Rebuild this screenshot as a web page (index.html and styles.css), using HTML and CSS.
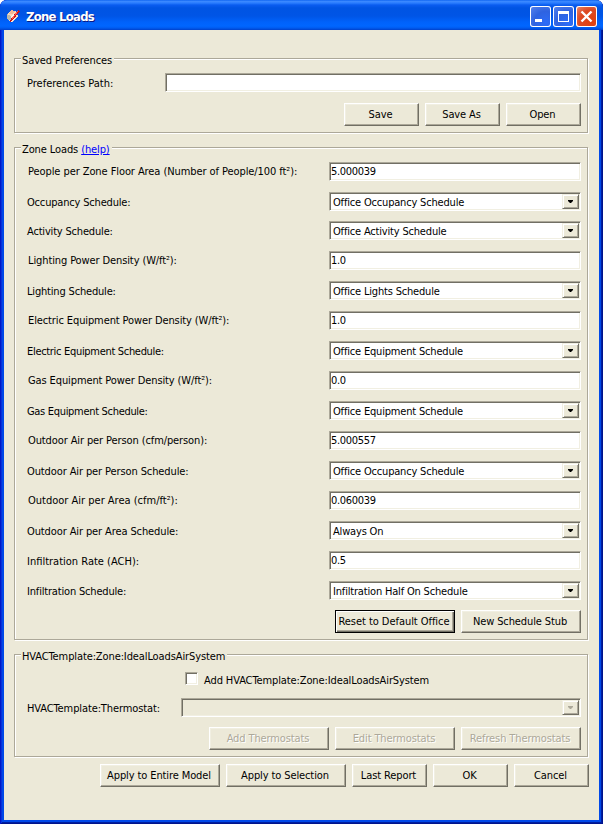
FILE: index.html
```html
<!DOCTYPE html>
<html lang="en">
<head>
<meta charset="utf-8">
<title>Zone Loads</title>
<link rel="stylesheet" href="styles.css">
</head>
<body>
<div class="window">
  <header class="titlebar">
    <svg class="app-icon" width="16" height="16" viewBox="0 0 16 16" shape-rendering="crispEdges">
      <path d="M1 6L6 2L11 4L12 9L6 14L1 11Z" fill="#f4d9bd"/>
      <path d="M1 6L5 8V13L1 11Z" fill="#b9b7ac"/>
      <path d="M5 8L8 6L9 11L5 14Z" fill="#f7f3e8"/>
      <path d="M5 2L9 3L7 6L3 6Z" fill="#f0b995"/>
      <path d="M12 2L14 3L6 13L4 14L5 11Z" fill="#c71616"/>
      <path d="M12 3L6 11" stroke="#ff5a4c"/>
    </svg>
    <h1 class="title">Zone Loads</h1>
    <div class="controls">
      <svg class="control" viewBox="0 0 21 21"><path d="M5 13h7v3H5z" fill="#fff"/></svg>
      <svg class="control" viewBox="0 0 21 21"><path d="M5 5h11v11H5zM6 8v7h9V8z" fill="#fff" fill-rule="evenodd"/></svg>
      <svg class="control close" viewBox="0 0 21 21"><path d="M5.5 5.5l10 10M15.5 5.5l-10 10" stroke="#fff" stroke-width="2.4"/></svg>
    </div>
  </header>
  <main class="client">
    <section class="group preferences">
      <h2 class="legend">Saved Preferences</h2>
      <div class="row"><span class="label wide">Preferences Path:</span><div class="field path"></div></div>
      <div class="buttons"><button class="btn small">Save</button><button class="btn small">Save As</button><button class="btn small">Open</button></div>
    </section>

    <section class="group loads">
      <h2 class="legend">Zone Loads <a href="#">(help)</a></h2>
      <div class="row first"><span class="label value people">People per Zone Floor Area (Number of People/100 ft²):</span><div class="field">5.000039</div></div>
      <div class="row short"><span class="label tight">Occupancy Schedule:</span><div class="field combo">Office Occupancy Schedule<i class="arrow"></i></div></div>
      <div class="row"><span class="label tight">Activity Schedule:</span><div class="field combo">Office Activity Schedule<i class="arrow"></i></div></div>
      <div class="row"><span class="label value">Lighting Power Density (W/ft²):</span><div class="field">1.0</div></div>
      <div class="row"><span class="label tight">Lighting Schedule:</span><div class="field combo">Office Lights Schedule<i class="arrow"></i></div></div>
      <div class="row"><span class="label value">Electric Equipment Power Density (W/ft²):</span><div class="field">1.0</div></div>
      <div class="row"><span class="label tighter">Electric Equipment Schedule:</span><div class="field combo">Office Equipment Schedule<i class="arrow"></i></div></div>
      <div class="row"><span class="label value">Gas Equipment Power Density (W/ft²):</span><div class="field">0.0</div></div>
      <div class="row"><span class="label tighter">Gas Equipment Schedule:</span><div class="field combo">Office Equipment Schedule<i class="arrow"></i></div></div>
      <div class="row"><span class="label value">Outdoor Air per Person (cfm/person):</span><div class="field">5.000557</div></div>
      <div class="row"><span class="label">Outdoor Air per Person Schedule:</span><div class="field combo">Office Occupancy Schedule<i class="arrow"></i></div></div>
      <div class="row"><span class="label value wide">Outdoor Air per Area (cfm/ft²):</span><div class="field">0.060039</div></div>
      <div class="row"><span class="label">Outdoor Air per Area Schedule:</span><div class="field combo">Always On<i class="arrow"></i></div></div>
      <div class="row"><span class="label wide">Infiltration Rate (ACH):</span><div class="field">0.5</div></div>
      <div class="row"><span class="label tight">Infiltration Schedule:</span><div class="field combo">Infiltration Half On Schedule<i class="arrow"></i></div></div>
      <div class="buttons"><button class="btn default">Reset to Default Office</button><button class="btn">New Schedule Stub</button></div>
    </section>

    <section class="group hvac">
      <h2 class="legend">HVACTemplate:Zone:IdealLoadsAirSystem</h2>
      <div class="check"><span class="box"></span>Add HVACTemplate:Zone:IdealLoadsAirSystem</div>
      <div class="row"><span class="label">HVACTemplate:Thermostat:</span><div class="field combo thermostat"><i class="arrow"></i></div></div>
      <div class="buttons"><button class="btn" disabled>Add Thermostats</button><button class="btn" disabled>Edit Thermostats</button><button class="btn" disabled>Refresh Thermostats</button></div>
    </section>

    <footer class="buttons actions"><button class="btn">Apply to Entire Model</button><button class="btn">Apply to Selection</button><button class="btn small">Last Report</button><button class="btn small">OK</button><button class="btn small">Cancel</button></footer>
  </main>
</div>
</body>
</html>
```

FILE: styles.css
```css
* { box-sizing: border-box; }

body {
  margin: 0;
  background: #fff;
  color: #000;
  font: 11px/13px "DejaVu Sans Condensed", "DejaVu Sans", sans-serif;
  letter-spacing: -0.11px;
}

.window {
  width: 603px;
  height: 824px;
  display: flex;
  flex-direction: column;
  padding: 0 4px 4px;
  border-radius: 7px 7px 0 0;
  overflow: hidden;
  background: #0048e8;
  box-shadow: inset 1px 0 #0019c8, inset -1px 0 #00138c, inset 0 -1px #00138c, inset 2px 0 #0831d9, inset -2px -2px #001ea0;
}

.titlebar {
  height: 30px;
  flex: none;
  margin: 0 -4px;
  padding: 2px 6px 0 6px;
  display: flex;
  align-items: center;
  background: linear-gradient(#0058ee 0, #3f8cff 1px, #2a7dff 3px, #0a5cf0 5px, #0054e3 8px, #0055e6 16px, #0062fb 22px, #0066ff 26px, #005bf0 28px, #0040cb 30px);
}

.app-icon { margin-right: 4px; }

.title {
  margin: 2px 0 0;
  flex: 1;
  color: #fff;
  font: bold 13px/16px "DejaVu Sans Condensed", sans-serif;
  letter-spacing: -0.75px;
  text-shadow: 1px 1px #0a1883;
}

.controls { display: flex; gap: 2px; }

.control {
  width: 21px;
  height: 21px;
  border-radius: 3px;
  background: radial-gradient(circle at 75% 80%, #2c6cf8, #2f63e0 50%, #5a86ee 100%);
  box-shadow: inset 0 0 0 1px #fff;
}

.close { background: radial-gradient(circle at 75% 75%, #e2400c, #dc4a24 55%, #eb8f74 100%); }

.client {
  flex: 1;
  background: #ece9d8;
  padding: 28px 10px 0 10px;
}

.group {
  width: 574px;
  border: 1px solid #aca899;
  box-shadow: inset 1px 1px #fff, 1px 1px #fff;
  padding: 0 6px 0 12px;
}

.preferences { height: 75px; }
.loads { height: 493px; margin-top: 14px; }
.hvac { height: 103px; margin-top: 14px; }

.legend {
  width: max-content;
  margin: -5px 0 -1px -6px;
  padding: 0 2px 0 1px;
  background: #ece9d8;
  font: inherit;
}

.legend a { color: #00f; }

.row {
  height: 30px;
  display: flex;
  align-items: flex-start;
  justify-content: space-between;
}

.row.short { height: 29px; }
.label { padding-top: 4px; white-space: nowrap; }
.label.value { padding: 3px 0 0 1px; }
.people { letter-spacing: -0.08px; }
.tight { letter-spacing: -0.18px; }
.tighter { letter-spacing: -0.31px; }
.wide { letter-spacing: 0; }
.first { margin-top: 7px; }

.field {
  width: 252px;
  height: 19px;
  padding: 2px 0 0 1px;
  border: 1px solid;
  border-color: #aca899 #fff #fff #aca899;
  box-shadow: inset 1px 1px #716f64, inset -1px -1px #f1efe2;
  background: #fff;
  letter-spacing: -0.3px;
  white-space: nowrap;
}

.combo {
  display: flex;
  justify-content: space-between;
  padding: 1px 1px 1px 3px;
  line-height: 17px;
  letter-spacing: -0.18px;
}

.arrow {
  width: 17px;
  height: 15px;
  border: 1px solid;
  border-color: #f1efe2 #716f64 #716f64 #f1efe2;
  box-shadow: inset 1px 1px #fff, inset -1px -1px #aca899;
  background: #ece9d8;
  display: grid;
  place-items: center;
}

.arrow::before {
  content: "";
  width: 5px;
  height: 3px;
  background: #000;
  clip-path: polygon(0 0, 100% 0, 100% 34%, 60% 100%, 40% 100%, 0 34%);
}

.path { width: 416px; }
.preferences .row { margin-top: 8px; height: 29px; }
.preferences .legend { margin-bottom: -2px; }

.buttons {
  display: flex;
  justify-content: flex-end;
  gap: 6px;
}

.preferences .buttons { margin-top: 1px; }

.btn {
  width: 120px;
  height: 23px;
  padding: 0 2px 1px 0;
  border: 1px solid;
  border-color: #fff #716f64 #716f64 #fff;
  box-shadow: inset -1px -1px #aca899, inset 1px 1px #f1efe2;
  background: #ece9d8;
  color: #000;
  font: inherit;
  letter-spacing: inherit;
  white-space: nowrap;
}

.small { width: 75px; }

.default {
  border-color: #000;
  box-shadow: inset 1px 1px #fff, inset -1px -1px #716f64, inset -2px -2px #aca899;
  letter-spacing: -0.05px;
}

.btn:disabled { color: #aca899; text-shadow: 1px 1px #fff; }

.loads .buttons { margin-top: -1px; }

.check {
  display: flex;
  gap: 6px;
  margin: 10px 0 0 158px;
  height: 26px;
  padding-top: 2px;
}

.box {
  width: 13px;
  height: 13px;
  margin-top: -2px;
  border: 1px solid;
  border-color: #aca899 #fff #fff #aca899;
  box-shadow: inset 1px 1px #716f64, inset -1px -1px #f1efe2;
  background: #fff;
}

.thermostat { width: 400px; justify-content: flex-end; background: #ece9d8; }
.hvac .row { height: 29px; }

.thermostat .arrow::before {
  background: #aca899;
  filter: drop-shadow(1px 1px #fff);
}

.actions { margin-top: 7px; }
```
